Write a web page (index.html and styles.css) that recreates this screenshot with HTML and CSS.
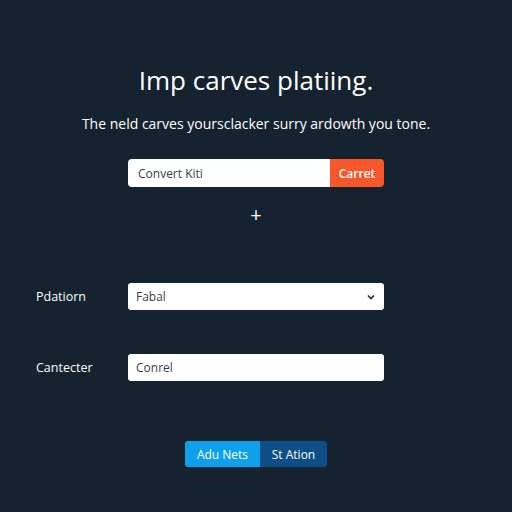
FILE: index.html
```html
<!DOCTYPE html>
<html lang="en">
<head>
  <meta charset="UTF-8">
  <meta name="viewport" content="width=device-width, initial-scale=1.0">
  <title>Imp carves platiing.</title>
  <link rel="stylesheet" href="styles.css">
</head>
<body>

  <main class="pagina">
    <h1 class="titulo">Imp carves platiing.</h1>
    <p class="subtitulo">The neld carves yoursclacker surry ardowth you tone.</p>

    <div class="busca">
      <input class="busca-campo" type="text" value="Convert Kiti">
      <button class="busca-botao">Carret</button>
    </div>

    <div class="mais">+</div>

    <div class="campo">
      <label class="campo-rotulo">Pdatiorn</label>
      <div class="seletor">
        <span>Fabal</span>
        <svg width="8" height="6" viewBox="0 0 8 6"><path d="M1 1.5 L4 4.5 L7 1.5" fill="none" stroke="#1c2530" stroke-width="1.6"/></svg>
      </div>
    </div>

    <div class="campo campo-segundo">
      <label class="campo-rotulo">Cantecter</label>
      <input class="campo-texto" type="text" value="Conrel">
    </div>

    <div class="acoes">
      <button class="acao acao-primaria">Adu Nets</button>
      <button class="acao acao-secundaria">St Ation</button>
    </div>
  </main>

</body>
</html>
```

FILE: styles.css
```css
:root {
  --fundo: #15222f;
  --texto: #ffffff;
  --laranja: #f5572a;
  --azul-claro: #0ea0ea;
  --azul-escuro: #0d4e86;
}

body {
  margin: 0;
  background-color: var(--fundo);
  color: var(--texto);
  font-family: "Open Sans", Arial, sans-serif;
  min-height: 100vh;
}

.pagina {
  display: flex;
  flex-direction: column;
  align-items: center;
  padding-top: 62px;
}

.titulo {
  margin: 0;
  font-size: 26px;
  font-weight: 500;
  line-height: 36px;
}

.subtitulo {
  margin: 16px 0 0;
  font-size: 14px;
  line-height: 20px;
}

.busca {
  display: flex;
  width: 256px;
  height: 28px;
  margin-top: 25px;
  border-radius: 4px;
  overflow: hidden;
}

.busca-campo {
  flex: 1;
  border: none;
  padding: 0 10px;
  font-family: inherit;
  font-size: 12px;
  color: #3a3f45;
  outline: none;
}

.busca-botao {
  width: 54px;
  border: none;
  background-color: var(--laranja);
  color: #fff;
  font-family: inherit;
  font-size: 12px;
  font-weight: 600;
}

.mais {
  margin-top: 13px;
  font-size: 20px;
  line-height: 30px;
}

.campo {
  align-self: stretch;
  display: grid;
  grid-template-columns: 92px 256px;
  align-items: center;
  padding-left: 36px;
  margin-top: 53px;
}

.campo-segundo {
  margin-top: 44px;
}

.campo-rotulo {
  font-size: 12.5px;
}

.seletor,
.campo-texto {
  box-sizing: border-box;
  height: 27px;
  background: #fff;
  border: none;
  border-radius: 3px;
  padding: 0 9px 0 8px;
  color: #3a3f45;
  font-family: inherit;
  font-size: 12px;
}

.seletor {
  display: flex;
  align-items: center;
  justify-content: space-between;
}

.acoes {
  display: flex;
  margin-top: 60px;
  border-radius: 3px;
  overflow: hidden;
}

.acao {
  height: 26px;
  border: none;
  color: #fff;
  font-family: inherit;
  font-size: 12px;
}

.acao-primaria {
  width: 75px;
  background-color: var(--azul-claro);
}

.acao-secundaria {
  width: 67px;
  background-color: var(--azul-escuro);
}
```
